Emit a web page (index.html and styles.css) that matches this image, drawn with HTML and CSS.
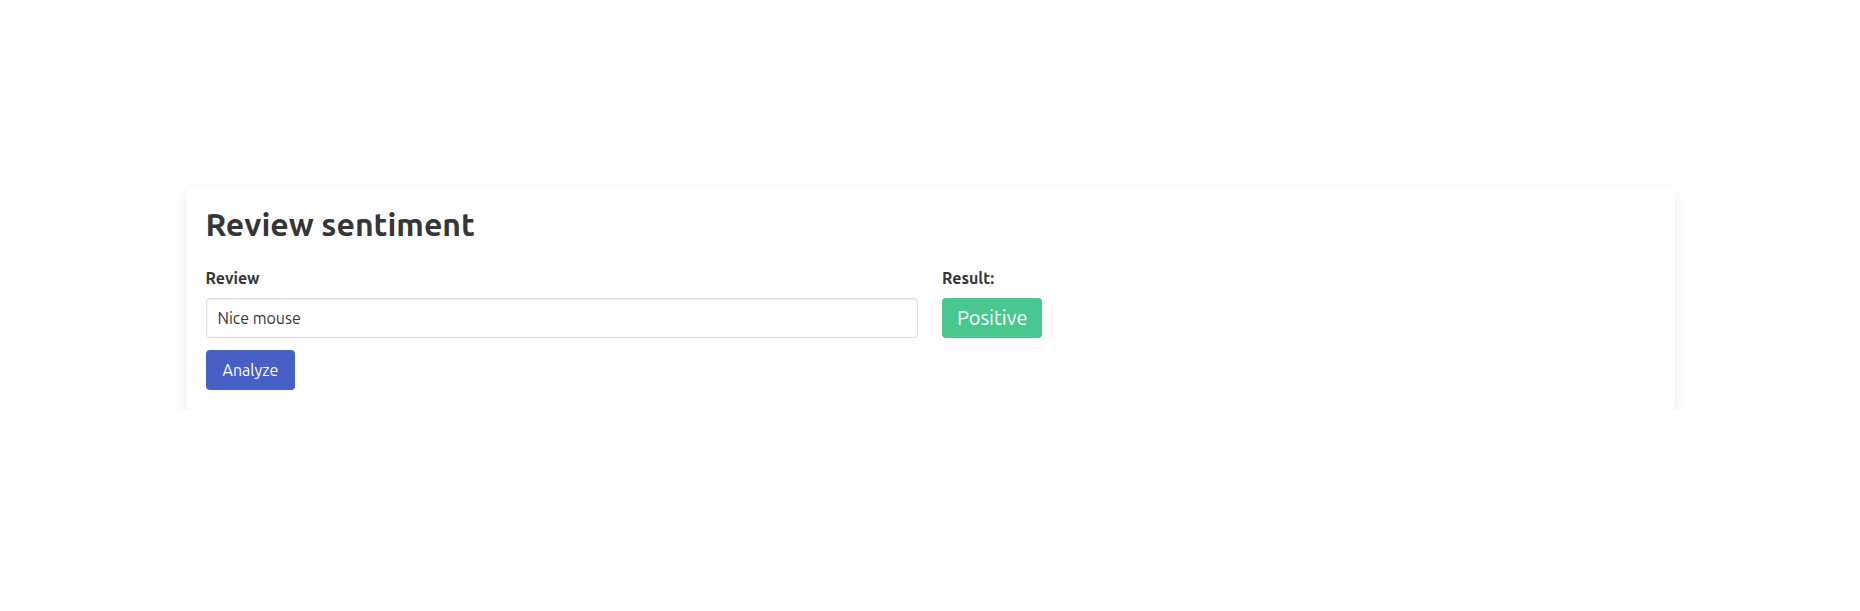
FILE: index.html
```html
<!DOCTYPE html>
<html lang="en">
<head>
<meta charset="utf-8">
<title>Review sentiment</title>
<link rel="stylesheet" href="styles.css">
</head>
<body>
<main class="page">
  <div class="box">
    <h1 class="title">Review sentiment</h1>
    <div class="columns">
      <div class="column">
        <div class="field">
          <label class="label" for="review">Review</label>
          <input class="input" id="review" type="text" value="Nice mouse">
        </div>
        <button class="button" type="button">Analyze</button>
      </div>
      <div class="column">
        <div class="label">Result:</div>
        <span class="tag">Positive</span>
      </div>
    </div>
  </div>
</main>
</body>
</html>
```

FILE: styles.css
```css
* { box-sizing: border-box; }
html, body { margin: 0; padding: 0; background: #fff; }
body {
  font-family: Ubuntu, "Open Sans", "Noto Sans", sans-serif;
  font-size: 16px;
  line-height: 1.5;
  color: #4a4a4a;
}
.page {
  display: flex;
  justify-content: center;
  padding-top: 186px;
}
.box {
  width: 1489px;
  background: #fff;
  border-radius: 6px;
  padding: 20px;
  box-shadow: 0 0.5em 1em -0.125em rgba(10,10,10,0.1), 0 0 0 1px rgba(10,10,10,0.02);
}
.title {
  margin: 0 0 24px;
  font-size: 32px;
  font-weight: 700;
  line-height: 1.125;
  color: #363636;
}
.columns {
  display: flex;
  margin: -12px -12px -12px;
}
.column {
  flex: 0 0 50%;
  padding: 12px;
}
.field { margin-bottom: 12px; }
.label {
  display: block;
  margin-bottom: 8px;
  font-size: 16px;
  font-weight: 700;
  color: #363636;
}
.input {
  display: block;
  width: 100%;
  height: 40px;
  padding: 7px 11px;
  font: inherit;
  color: #363636;
  background: #fff;
  border: 1px solid #dbdbdb;
  border-radius: 4px;
  box-shadow: inset 0 0.0625em 0.125em rgba(10,10,10,0.05);
}
.button {
  height: 40px;
  padding: 7px 16px;
  font: inherit;
  color: #fff;
  background: #485fc7;
  border: 1px solid transparent;
  border-radius: 4px;
  cursor: pointer;
}
.tag {
  display: inline-flex;
  align-items: center;
  height: 40px;
  padding: 0 15px;
  font-size: 20px;
  color: #fff;
  background: #48c78e;
  border-radius: 4px;
  white-space: nowrap;
}
```
